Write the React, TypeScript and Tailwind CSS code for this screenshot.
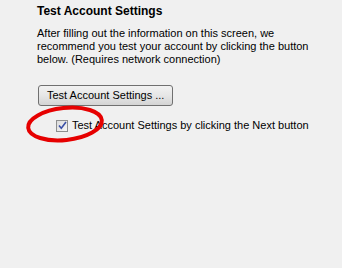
import React from 'react';

function CheckMark() {
  return (
    <span className="flex h-[12px] w-[12px] items-center justify-center border border-[#8e8f8f] bg-gradient-to-br from-[#dcdcdc] to-[#f6f6f6]">
      <svg width="9" height="9" viewBox="0 0 9 9">
        <path d="M1 4.5 L3.3 7.2 L8 1" fill="none" stroke="#3a4fa6" strokeWidth="1.6" />
      </svg>
    </span>
  );
}

export default function App() {
  return (
    <div
      className="relative h-[268px] w-[342px] bg-[#f0f0f0] text-[11px] leading-[13px] text-black"
      style={{ fontFamily: '"Liberation Sans", Arial, sans-serif' }}
    >
      <div className="pl-[37px] pt-[4px]">
        <h1 className="text-[12px] font-bold leading-[14px]">Test Account Settings</h1>
        <p className="mt-[9px] w-[282px]">
          After filling out the information on this screen, we recommend you test your account by
          clicking the button below. (Requires network connection)
        </p>
        <button className="ml-px mt-[19px] flex h-[21px] w-[135px] items-center rounded-[3px] border border-[#707070] bg-gradient-to-b from-[#f2f2f2] via-[#e6e6e6] to-[#d4d4d4] pl-[8px] text-[11px]">
          Test Account Settings ...
        </button>
        <label className="ml-[19px] mt-[13px] flex items-center gap-[4px]">
          <CheckMark />
          <span>Test Account Settings by clicking the Next button</span>
        </label>
      </div>
      <svg className="pointer-events-none absolute left-0 top-0" width="342" height="268">
        <ellipse
          cx="65"
          cy="124"
          rx="37"
          ry="16"
          fill="none"
          stroke="#e60000"
          strokeWidth="4"
          transform="rotate(-6 65 124)"
        />
      </svg>
    </div>
  );
}
